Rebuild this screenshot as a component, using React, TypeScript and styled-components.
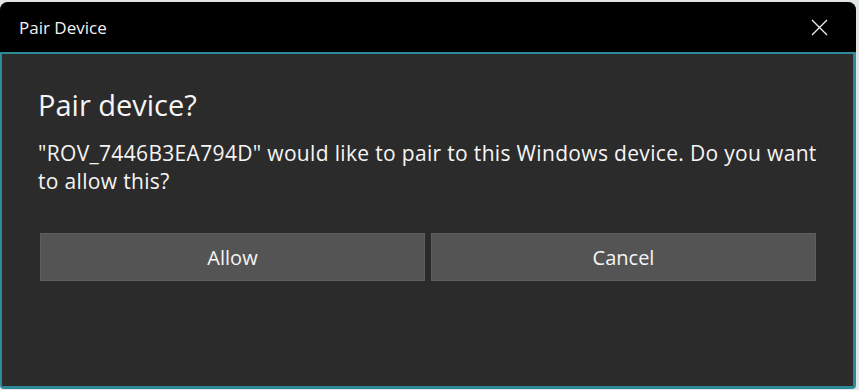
import styled, { createGlobalStyle } from 'styled-components';

const GlobalStyle = createGlobalStyle`
  html, body {
    margin: 0;
    padding: 0;
    background: #e4e4e4;
  }
  body {
    font-family: 'Open Sans', 'Noto Sans', sans-serif;
  }
`;

const Window = styled.div`
  margin-top: 2px;
  width: 856px;
  height: 387px;
  display: flex;
  flex-direction: column;
  border-radius: 8px 8px 4px 4px;
  overflow: hidden;
  background: #2b8a97;
`;

const TitleBar = styled.div`
  height: 50px;
  flex: none;
  display: flex;
  align-items: center;
  justify-content: space-between;
  padding: 0 28px 0 19px;
  background: #000;
  color: #f2f2f2;
  font-size: 17px;
`;

const CloseButton = styled.button`
  display: flex;
  align-items: center;
  justify-content: center;
  padding: 0;
  border: none;
  background: transparent;
  color: #f0f0f0;
  cursor: pointer;
`;

const Body = styled.div`
  flex: 1;
  margin: 2px 3px 3px 2px;
  padding: 33px 27px 0 36px;
  background: #2b2b2b;
  color: #f5f5f5;
`;

const Heading = styled.h1`
  margin: 0;
  font-size: 29px;
  font-weight: 400;
  line-height: 36px;
`;

const Message = styled.p`
  margin: 16px 0 0;
  font-size: 21px;
  letter-spacing: 0.33px;
  line-height: 28px;
`;

const Actions = styled.div`
  display: grid;
  grid-template-columns: 1fr 1fr;
  gap: 6px;
  margin: 38px 10px 0 2px;
`;

const Button = styled.button`
  height: 48px;
  border: 1px solid #5e5e5e;
  background: #545454;
  color: #f5f5f5;
  font-family: inherit;
  font-size: 20px;
  cursor: pointer;
`;

export default function App() {
  return (
    <>
      <GlobalStyle />
      <Window>
        <TitleBar>
          <span>Pair Device</span>
          <CloseButton aria-label="Close">
            <svg width="17" height="17" viewBox="0 0 17 17">
              <path d="M1 1L16 16M16 1L1 16" stroke="currentColor" strokeWidth="1.3" fill="none" />
            </svg>
          </CloseButton>
        </TitleBar>
        <Body>
          <Heading>Pair device?</Heading>
          <Message>
            "ROV_7446B3EA794D" would like to pair to this Windows device. Do you want to allow this?
          </Message>
          <Actions>
            <Button>Allow</Button>
            <Button>Cancel</Button>
          </Actions>
        </Body>
      </Window>
    </>
  );
}
